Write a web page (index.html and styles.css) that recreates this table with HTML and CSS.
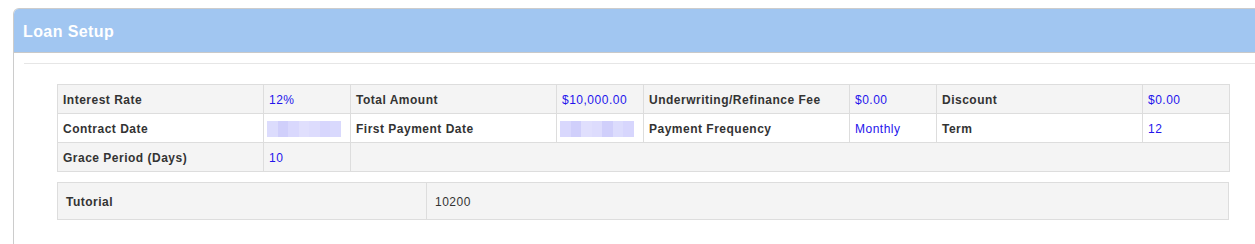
FILE: index.html
```html
<!DOCTYPE html>
<html>
<head>
<meta charset="utf-8">
<link rel="stylesheet" href="styles.css">
</head>
<body>
<div class="panel">
  <div class="panel-heading">Loan Setup</div>
  <div class="panel-body">
    <hr class="divider">
    <table class="grid">
      <colgroup>
        <col class="c-label"><col class="c-value"><col class="c-label"><col class="c-value">
        <col class="c-label"><col class="c-value"><col class="c-label"><col class="c-value">
      </colgroup>
      <tr class="shade">
        <th>Interest Rate</th><td class="val">12%</td>
        <th>Total Amount</th><td class="val">$10,000.00</td>
        <th>Underwriting/Refinance Fee</th><td class="val">$0.00</td>
        <th>Discount</th><td class="val">$0.00</td>
      </tr>
      <tr>
        <th>Contract Date</th>
        <td><span class="blur"><i class="b1"></i><i class="b2"></i><i class="b3"></i><i class="b4"></i><i class="b5"></i><i class="b6"></i><i class="b7"></i></span></td>
        <th>First Payment Date</th>
        <td><span class="blur"><i class="b3"></i><i class="b2"></i><i class="b4"></i><i class="b5"></i><i class="b2"></i><i class="b1"></i><i class="b6"></i></span></td>
        <th>Payment Frequency</th><td class="val">Monthly</td>
        <th>Term</th><td class="val">12</td>
      </tr>
      <tr class="shade">
        <th>Grace Period (Days)</th><td class="val">10</td>
        <td colspan="6"></td>
      </tr>
    </table>
    <table class="grid tutorial">
      <tr class="shade">
        <th class="t-label">Tutorial</th><td class="t-value">10200</td>
      </tr>
    </table>
  </div>
</div>
</body>
</html>
```

FILE: styles.css
```css
html, body {
  margin: 0;
  padding: 0;
  overflow: hidden;
  background: #ffffff;
}
body {
  font-family: "Liberation Sans", Arial, Helvetica, sans-serif;
  font-size: 12px;
  color: #333333;
  padding: 8px 0 0 13px;
}
.panel {
  width: 1260px;
  height: 236px;
  border: 1px solid #cccccc;
  border-bottom: 0;
  border-radius: 6px 6px 0 0;
  background: #ffffff;
  box-sizing: border-box;
}
.panel-heading {
  height: 43px;
  background: #a1c6f1;
  border-bottom: 1px solid #c9c9c9;
  border-radius: 5px 5px 0 0;
  color: #ffffff;
  font-weight: bold;
  font-size: 16px;
  letter-spacing: 0.4px;
  line-height: 45px;
  padding-left: 9px;
}
.panel-body {
  padding: 10px 0 0 10px;
}
.divider {
  margin: 0;
  border: 0;
  border-top: 1px solid #e6e6e6;
  height: 0;
}
.grid {
  border-collapse: collapse;
  width: 1172px;
  margin: 20px 0 0 33px;
  table-layout: fixed;
  letter-spacing: 0.5px;
}
.c-label { width: 206px; }
.c-value { width: 87px; }
.grid th, .grid td {
  border: 1px solid #dddddd;
  padding: 6px 5px 4px;
  height: 18px;
  line-height: 18px;
  text-align: left;
  vertical-align: middle;
  white-space: nowrap;
}
.grid th {
  font-weight: bold;
  color: #333333;
}
.grid .val {
  color: #2414ec;
}
.shade th, .shade td {
  background: #f4f4f4;
}
.blur {
  display: flex;
  width: 74px;
  height: 16px;
  margin: 0 0 0 -2px;
}
.blur i {
  flex: 1;
}
.b1 { background: #dcdcfd; }
.b2 { background: #d0cffb; }
.b3 { background: #d9d8fd; }
.b4 { background: #e0dffd; }
.b5 { background: #dddcfd; }
.b6 { background: #d7d6fd; }
.b7 { background: #d9d9fd; }
.tutorial {
  margin-top: 10px;
}
.tutorial th, .tutorial td {
  padding: 9px 8px 7px;
  height: 20px;
  line-height: 20px;
}
.t-label { width: 352px; }
.t-value { color: #333333; font-weight: normal; }
```
